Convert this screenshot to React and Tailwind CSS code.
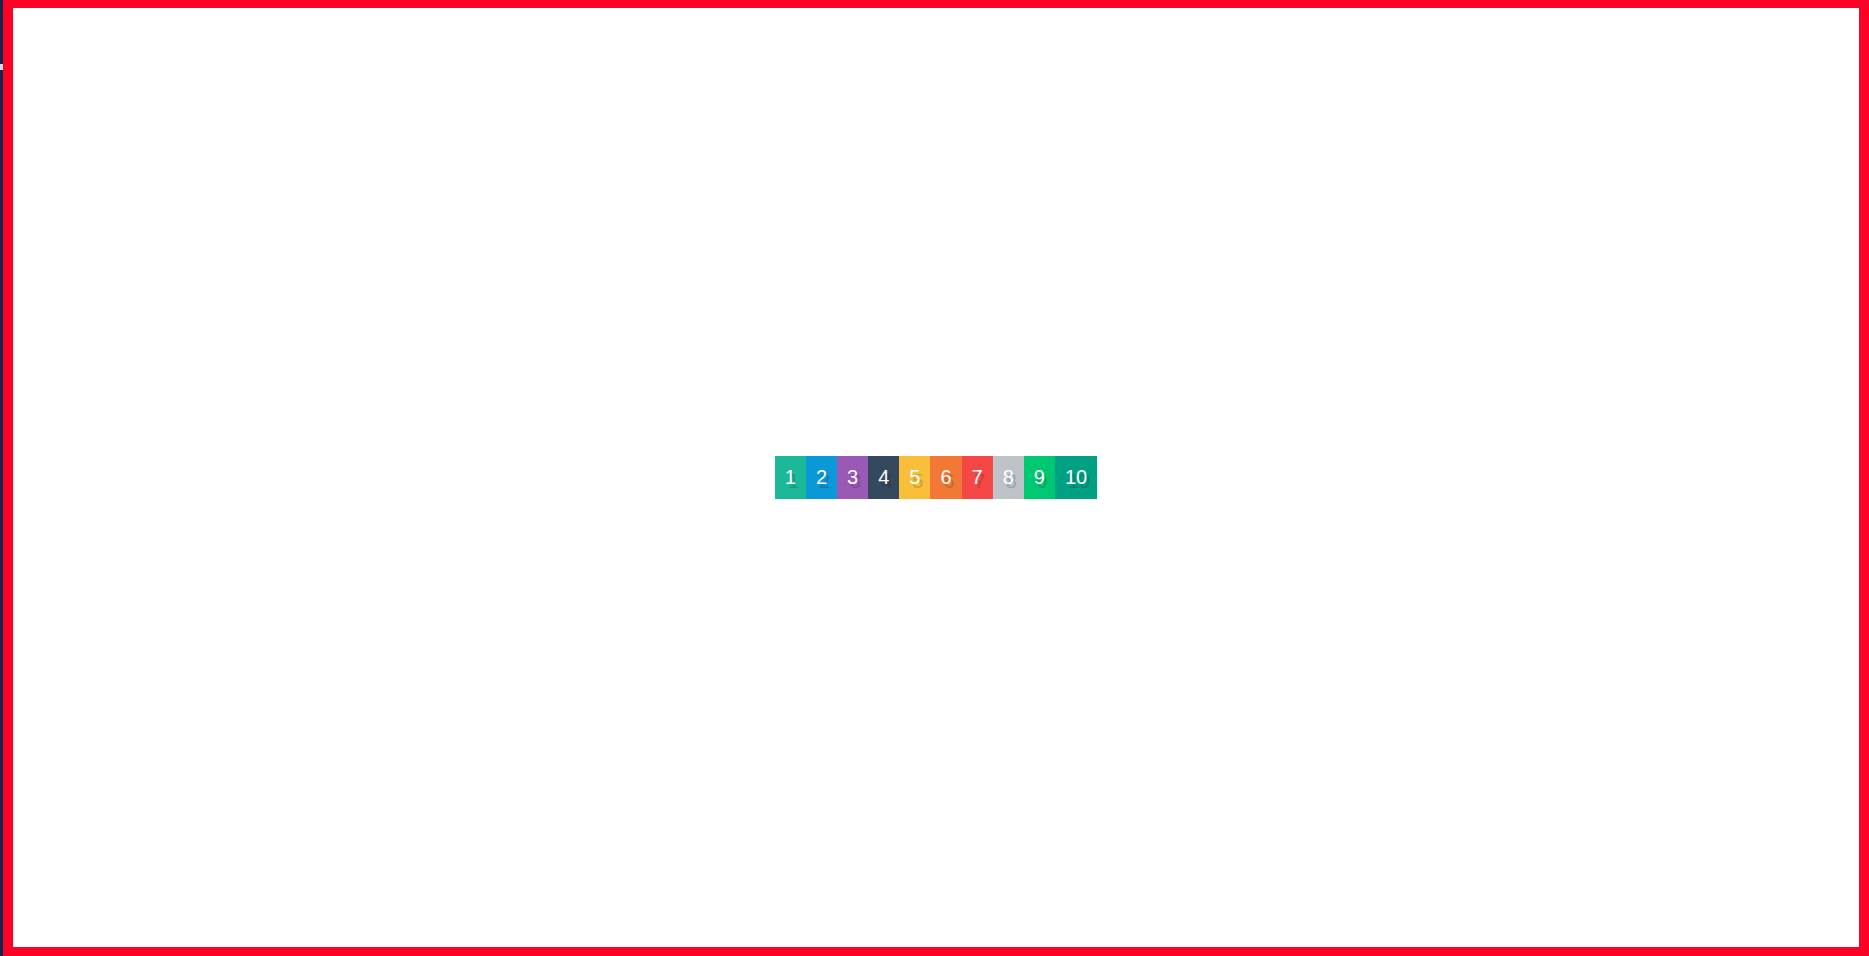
const tiles = [
  { n: "1", bg: "bg-[#1bb99a]" },
  { n: "2", bg: "bg-[#0a98d8]" },
  { n: "3", bg: "bg-[#9b59b6]" },
  { n: "4", bg: "bg-[#34495e]" },
  { n: "5", bg: "bg-[#f9bf3b]" },
  { n: "6", bg: "bg-[#f27935]" },
  { n: "7", bg: "bg-[#f64747]" },
  { n: "8", bg: "bg-[#bdc3c7]" },
  { n: "9", bg: "bg-[#00c872]" },
  { n: "10", bg: "bg-[#00a085]" },
];

export default function App() {
  return (
    <div className="flex h-screen w-full bg-white font-['Liberation_Sans',Arial,sans-serif]">
      <div className="relative w-[3px] shrink-0 bg-[#14284a]">
        <div className="absolute left-0 top-[64px] h-[6px] w-[3px] bg-[#d8dce2]" />
      </div>
      <div className="flex flex-1 items-center justify-center border-t-[8px] border-r-[10px] border-b-[9px] border-l-[10px] border-[#ff0027] bg-white">
        <div className="flex">
          {tiles.map((t) => (
            <div
              key={t.n}
              className={`${t.bg} flex h-[43px] items-center px-[10px] pb-[2px] text-[20px] text-white [text-shadow:3px_4px_1px_rgba(0,0,0,0.18)]`}
            >
              {t.n}
            </div>
          ))}
        </div>
      </div>
    </div>
  );
}
